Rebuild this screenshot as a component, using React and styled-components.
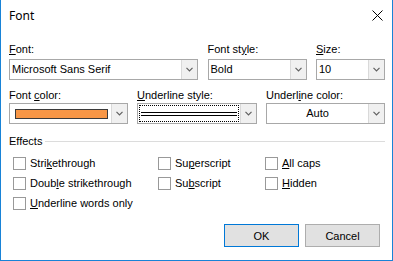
import React from 'react';
import styled, { createGlobalStyle } from 'styled-components';

const Global = createGlobalStyle`
  html, body {
    margin: 0;
    padding: 0;
    background: #fff;
  }
  body {
    font-family: "Liberation Sans", "Noto Sans", sans-serif;
    font-size: 11px;
    color: #000;
  }
`;

const Window = styled.div`
  box-sizing: border-box;
  width: 393px;
  height: 261px;
  background: #fff;
  border: 1px solid #1883d7;
  border-top: none;
  display: flex;
  flex-direction: column;
`;

const TitleBar = styled.div`
  height: 30px;
  display: flex;
  align-items: center;
  justify-content: space-between;
  padding: 0 9px 0 8px;
`;

const Title = styled.span`
  font-family: "Noto Sans", sans-serif;
  font-size: 12px;
`;

const Body = styled.div`
  padding: 12px 7px 0 8px;
  display: flex;
  flex-direction: column;
`;

const FieldRow = styled.div`
  display: grid;
  grid-template-columns: ${p => p.$cols};
  justify-content: space-between;
  margin-top: ${p => p.$top || 0}px;
`;

const Field = styled.div`
  display: flex;
  flex-direction: column;
`;

const Label = styled.div`
  line-height: 15px;
  height: 15px;
  margin-bottom: ${p => p.$gap || 0}px;
  white-space: nowrap;
`;

const Key = styled.span`
  text-decoration: underline;
  text-underline-offset: 1px;
`;

const Combo = styled.div`
  box-sizing: border-box;
  height: 21px;
  border: 1px solid #a8a8a8;
  background: #fff;
  display: flex;
  align-items: stretch;
`;

const ComboValue = styled.div`
  flex: 1;
  display: flex;
  align-items: center;
  justify-content: ${p => (p.$center ? 'center' : 'flex-start')};
  padding-left: ${p => (p.$pad === undefined ? 2 : p.$pad)}px;
  line-height: 19px;
  white-space: nowrap;
  overflow: hidden;
`;

const ArrowBox = styled.div`
  width: 15px;
  border-left: 1px solid #d9d9d9;
  background: #f0f0f0;
  display: flex;
  align-items: center;
  justify-content: center;
`;

const Swatch = styled.div`
  box-sizing: border-box;
  width: 93px;
  height: 10px;
  border: 1px solid #3a3a3a;
  background: #f79646;
  margin-left: 3px;
`;

const FocusRect = styled.div`
  box-sizing: border-box;
  flex: 1;
  margin: 1px;
  border: 1px dotted #000;
  display: flex;
  align-items: center;
  padding: 0 1px;
`;

const DoubleLine = styled.div`
  flex: 1;
  height: 2px;
  border-top: 1px solid #000;
  border-bottom: 1px solid #000;
  margin-top: 1px;
`;

const SectionHead = styled.div`
  display: flex;
  align-items: center;
  gap: 3px;
  margin-top: 10px;
  line-height: 15px;
`;

const Rule = styled.div`
  flex: 1;
  height: 1px;
  background: #dcdcdc;
`;

const CheckGrid = styled.div`
  display: grid;
  grid-template-columns: 145px 107px 1fr;
  grid-auto-rows: 20px;
  padding-left: 4px;
  margin-top: 4px;
`;

const CheckItem = styled.label`
  display: flex;
  align-items: center;
  gap: 4px;
  white-space: nowrap;
  grid-column: ${p => p.$col};
  grid-row: ${p => p.$row};
`;

const Box = styled.span`
  box-sizing: border-box;
  width: 13px;
  height: 13px;
  border: 1px solid #999;
  background: #fff;
  flex: none;
`;

const Footer = styled.div`
  display: flex;
  justify-content: flex-end;
  gap: 6px;
  padding-right: 5px;
  margin-top: 11px;
`;

const Button = styled.button`
  box-sizing: border-box;
  width: 75px;
  height: 23px;
  font-family: inherit;
  font-size: 11px;
  color: #000;
  background: #e1e1e1;
  border: 1px solid ${p => (p.$primary ? '#0078d7' : '#adadad')};
  padding: 0;
`;

const Chevron = () => (
  <svg width="7" height="5" viewBox="0 0 7 5">
    <polyline points="0.5,0.8 3.5,3.8 6.5,0.8" fill="none" stroke="#606060" strokeWidth="1.2" />
  </svg>
);

const CloseIcon = () => (
  <svg width="11" height="11" viewBox="0 0 11 11">
    <path d="M0.5 0.5 L10.5 10.5 M10.5 0.5 L0.5 10.5" stroke="#000" strokeWidth="1" />
  </svg>
);

const checks = [
  { col: 1, row: 1, pre: 'Stri', key: 'k', post: 'ethrough' },
  { col: 1, row: 2, pre: 'Doub', key: 'l', post: 'e strikethrough' },
  { col: 1, row: 3, pre: '', key: 'U', post: 'nderline words only' },
  { col: 2, row: 1, pre: 'Su', key: 'p', post: 'erscript' },
  { col: 2, row: 2, pre: 'Su', key: 'b', post: 'script' },
  { col: 3, row: 1, pre: '', key: 'A', post: 'll caps' },
  { col: 3, row: 2, pre: '', key: 'H', post: 'idden' },
];

export default function App() {
  return (
    <>
      <Global />
      <Window>
        <TitleBar>
          <Title>Font</Title>
          <CloseIcon />
        </TitleBar>
        <Body>
          <FieldRow $cols="189px 99px 69px">
            <Field>
              <Label $gap={2}><Key>F</Key>ont:</Label>
              <Combo>
                <ComboValue>Microsoft Sans Serif</ComboValue>
                <ArrowBox><Chevron /></ArrowBox>
              </Combo>
            </Field>
            <Field>
              <Label $gap={2}>Font st<Key>y</Key>le:</Label>
              <Combo>
                <ComboValue>Bold</ComboValue>
                <ArrowBox><Chevron /></ArrowBox>
              </Combo>
            </Field>
            <Field>
              <Label $gap={2}><Key>S</Key>ize:</Label>
              <Combo>
                <ComboValue>10</ComboValue>
                <ArrowBox><Chevron /></ArrowBox>
              </Combo>
            </Field>
          </FieldRow>

          <FieldRow $cols="119px 120px 119px" $top={8}>
            <Field>
              <Label>Font <Key>c</Key>olor:</Label>
              <Combo>
                <ComboValue $pad={2}><Swatch /></ComboValue>
                <ArrowBox><Chevron /></ArrowBox>
              </Combo>
            </Field>
            <Field>
              <Label><Key>U</Key>nderline style:</Label>
              <Combo>
                <FocusRect><DoubleLine /></FocusRect>
                <ArrowBox><Chevron /></ArrowBox>
              </Combo>
            </Field>
            <Field>
              <Label>Underl<Key>i</Key>ne color:</Label>
              <Combo>
                <ComboValue $center $pad={0}>Auto</ComboValue>
                <ArrowBox><Chevron /></ArrowBox>
              </Combo>
            </Field>
          </FieldRow>

          <SectionHead>
            <span>Effects</span>
            <Rule />
          </SectionHead>

          <CheckGrid>
            {checks.map(c => (
              <CheckItem key={c.pre + c.key + c.post} $col={c.col} $row={c.row}>
                <Box />
                <span>{c.pre}<Key>{c.key}</Key>{c.post}</span>
              </CheckItem>
            ))}
          </CheckGrid>

          <Footer>
            <Button $primary>OK</Button>
            <Button>Cancel</Button>
          </Footer>
        </Body>
      </Window>
    </>
  );
}
